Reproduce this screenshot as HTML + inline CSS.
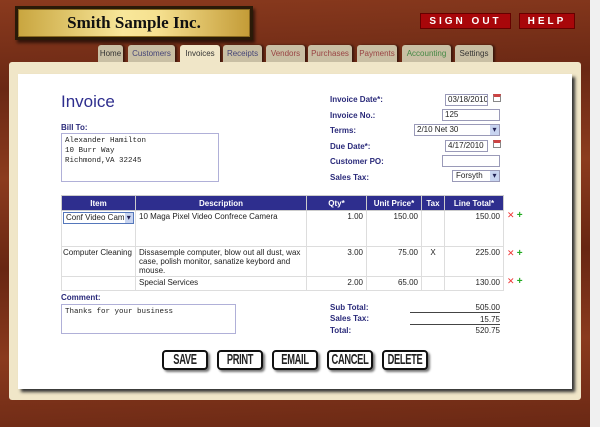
<!DOCTYPE html>
<html><head><style>
*{box-sizing:border-box;margin:0;padding:0}
body{width:600px;height:427px;overflow:hidden;position:relative;font-family:"Liberation Sans",Arial,sans-serif;font-size:8px;color:#222;
background:linear-gradient(178deg,#8a3a1e 0%,#6a2814 20%,#8c3c1e 40%,#682612 60%,#8a3a1e 80%,#6a2814 100%)}
.abs{position:absolute}
.plate{left:15px;top:6px;width:238px;height:34px;background:#2a1a08;padding:3px;box-shadow:2px 3px 3px rgba(0,0,0,.6)}
.plate div{width:100%;height:100%;border:1px solid #8a6a20;background:linear-gradient(90deg,#c9a640,#f8e79a 45%,#f6e190 60%,#c49c38);font-family:"Liberation Serif",serif;font-weight:bold;font-size:17px;text-align:center;line-height:26px;color:#111}
.rb{background:#a8070a;color:#fff;font-weight:bold;font-size:10px;letter-spacing:3px;text-align:center;line-height:16px;height:16px;top:13px;border:1px solid #600}
.tab{top:45px;height:18px;background:#c9bfa4;border-radius:3px 3px 0 0;font-size:8px;line-height:18px;text-align:center;box-shadow:2px 0 2px rgba(0,0,0,.5);white-space:nowrap;overflow:hidden}
.cream{left:9px;top:62px;width:572px;height:338px;background:#f0e6c8;border-radius:3px}
.white{left:18px;top:74px;width:554px;height:315px;background:#fff;box-shadow:3px 3px 3px #333}
.lab{color:#2a2a7a;font-weight:bold;font-size:8px}
.inp{border:1px solid #9a9ab8;background:#fff;font-size:8px;padding-left:2px;line-height:10px;height:12px;display:flex;white-space:nowrap;overflow:hidden}
.inp b{margin-left:auto;background:#c8d4f0;width:9px;text-align:center;color:#225;font-weight:normal}
.ta{border:1px solid #b0b0d8;font-family:"Liberation Mono",monospace;font-size:7.5px;padding:2px 3px;line-height:10px}
table{border-collapse:collapse;position:absolute;left:61px;top:195px;font-size:8px;table-layout:fixed}
th{background:#2e2e8e;color:#fff;height:15px;border:1px solid #ccc;font-size:8px}
td{border:1px solid #ddd;vertical-align:top;padding:1px 3px;line-height:9px}
.r{text-align:right}
.btn{top:350px;height:20px;border:2px solid #111;border-radius:4px;background:#fff;box-shadow:2px 2px 2px #777}
.btn span{position:absolute;left:50%;top:0;font-weight:bold;font-size:15px;line-height:16px;white-space:nowrap;transform:translateX(-50%) scaleX(.62);letter-spacing:-.5px}
.x{color:#e33;font-size:9px}.p{color:#2a2;font-weight:bold;font-size:10px}
</style></head><body>
<div class="abs plate"><div>Smith Sample Inc.</div></div>
<div class="abs rb" style="left:420px;width:91px">SIGN OUT</div>
<div class="abs rb" style="left:519px;width:56px">HELP</div>
<div class="abs" style="left:590px;top:0;width:10px;height:427px;background:#f0f0f0"></div>
<div class="abs tab" style="left:98px;width:25px;color:#333">Home</div>
<div class="abs tab" style="left:128px;width:47px;color:#447">Customers</div>
<div class="abs tab" style="left:180px;width:40px;background:#f0e6c8;color:#333">Invoices</div>
<div class="abs tab" style="left:223px;width:39px;color:#447">Receipts</div>
<div class="abs tab" style="left:266px;width:39px;color:#944">Vendors</div>
<div class="abs tab" style="left:308px;width:44px;color:#944">Purchases</div>
<div class="abs tab" style="left:357px;width:40px;color:#944">Payments</div>
<div class="abs tab" style="left:402px;width:49px;color:#484">Accounting</div>
<div class="abs tab" style="left:455px;width:38px;color:#333">Settings</div>
<div class="abs cream"></div>
<div class="abs white"></div>
<div class="abs" style="left:61px;top:92px;font-size:17px;color:#2e2e8e">Invoice</div>
<div class="abs lab" style="left:61px;top:123px">Bill To:</div>
<div class="abs ta" style="left:61px;top:133px;width:158px;height:49px">Alexander Hamilton<br>10 Burr Way<br>Richmond,VA 32245</div>
<div class="abs lab" style="left:330px;top:95px">Invoice Date*:</div>
<div class="abs lab" style="left:330px;top:111px">Invoice No.:</div>
<div class="abs lab" style="left:330px;top:126px">Terms:</div>
<div class="abs lab" style="left:330px;top:142px">Due Date*:</div>
<div class="abs lab" style="left:330px;top:157px">Customer PO:</div>
<div class="abs lab" style="left:330px;top:173px">Sales Tax:</div>
<div class="abs inp" style="left:445px;top:94px;width:43px">03/18/2010</div>
<div class="abs" style="left:493px;top:94px;width:8px;height:8px;border:1px solid #888;border-top:3px solid #c44"></div>
<div class="abs inp" style="left:442px;top:109px;width:58px">125</div>
<div class="abs inp" style="left:414px;top:124px;width:86px">2/10 Net 30<b>▾</b></div>
<div class="abs inp" style="left:445px;top:140px;width:43px">4/17/2010</div>
<div class="abs" style="left:493px;top:140px;width:8px;height:8px;border:1px solid #888;border-top:3px solid #c44"></div>
<div class="abs inp" style="left:442px;top:155px;width:58px"></div>
<div class="abs inp" style="left:452px;top:170px;width:48px;padding-left:3px">Forsyth<b>▾</b></div>
<table>
<tr><th style="width:74px">Item</th><th style="width:171px">Description</th><th style="width:60px">Qty*</th><th style="width:55px">Unit Price*</th><th style="width:23px">Tax</th><th style="width:59px">Line Total*</th></tr>
<tr style="height:36px"><td style="padding:1px"><div class="inp" style="width:71px;border-color:#5577bb">Conf Video Cam<b>▾</b></div></td><td>10 Maga Pixel Video Confrece Camera</td><td class="r">1.00</td><td class="r">150.00</td><td></td><td class="r">150.00</td></tr>
<tr style="height:30px"><td style="white-space:nowrap;padding:1px 1px;overflow:hidden">Computer Cleaning</td><td>Dissasemple computer, blow out all dust, wax case, polish monitor, sanatize keybord and mouse.</td><td class="r">3.00</td><td class="r">75.00</td><td style="text-align:center">X</td><td class="r">225.00</td></tr>
<tr style="height:14px"><td></td><td>Special Services</td><td class="r">2.00</td><td class="r">65.00</td><td></td><td class="r">130.00</td></tr>
</table>
<div class="abs" style="left:507px;top:210px"><span class="x">✕</span> <span class="p">+</span></div>
<div class="abs" style="left:507px;top:248px"><span class="x">✕</span> <span class="p">+</span></div>
<div class="abs" style="left:507px;top:276px"><span class="x">✕</span> <span class="p">+</span></div>
<div class="abs lab" style="left:61px;top:293px">Comment:</div>
<div class="abs ta" style="left:61px;top:304px;width:175px;height:30px">Thanks for your business</div>
<div class="abs lab" style="left:330px;top:303px">Sub Total:</div>
<div class="abs lab" style="left:330px;top:314px">Sales Tax:</div>
<div class="abs lab" style="left:330px;top:326px">Total:</div>
<div class="abs r" style="left:410px;top:303px;width:90px;border-bottom:1px solid #444">505.00</div>
<div class="abs r" style="left:410px;top:315px;width:90px;border-bottom:1px solid #444">15.75</div>
<div class="abs r" style="left:410px;top:326px;width:90px">520.75</div>
<div class="abs btn" style="left:162px;width:46px"><span>SAVE</span></div>
<div class="abs btn" style="left:217px;width:46px"><span>PRINT</span></div>
<div class="abs btn" style="left:272px;width:46px"><span>EMAIL</span></div>
<div class="abs btn" style="left:327px;width:46px"><span>CANCEL</span></div>
<div class="abs btn" style="left:382px;width:46px"><span>DELETE</span></div>
</body></html>
